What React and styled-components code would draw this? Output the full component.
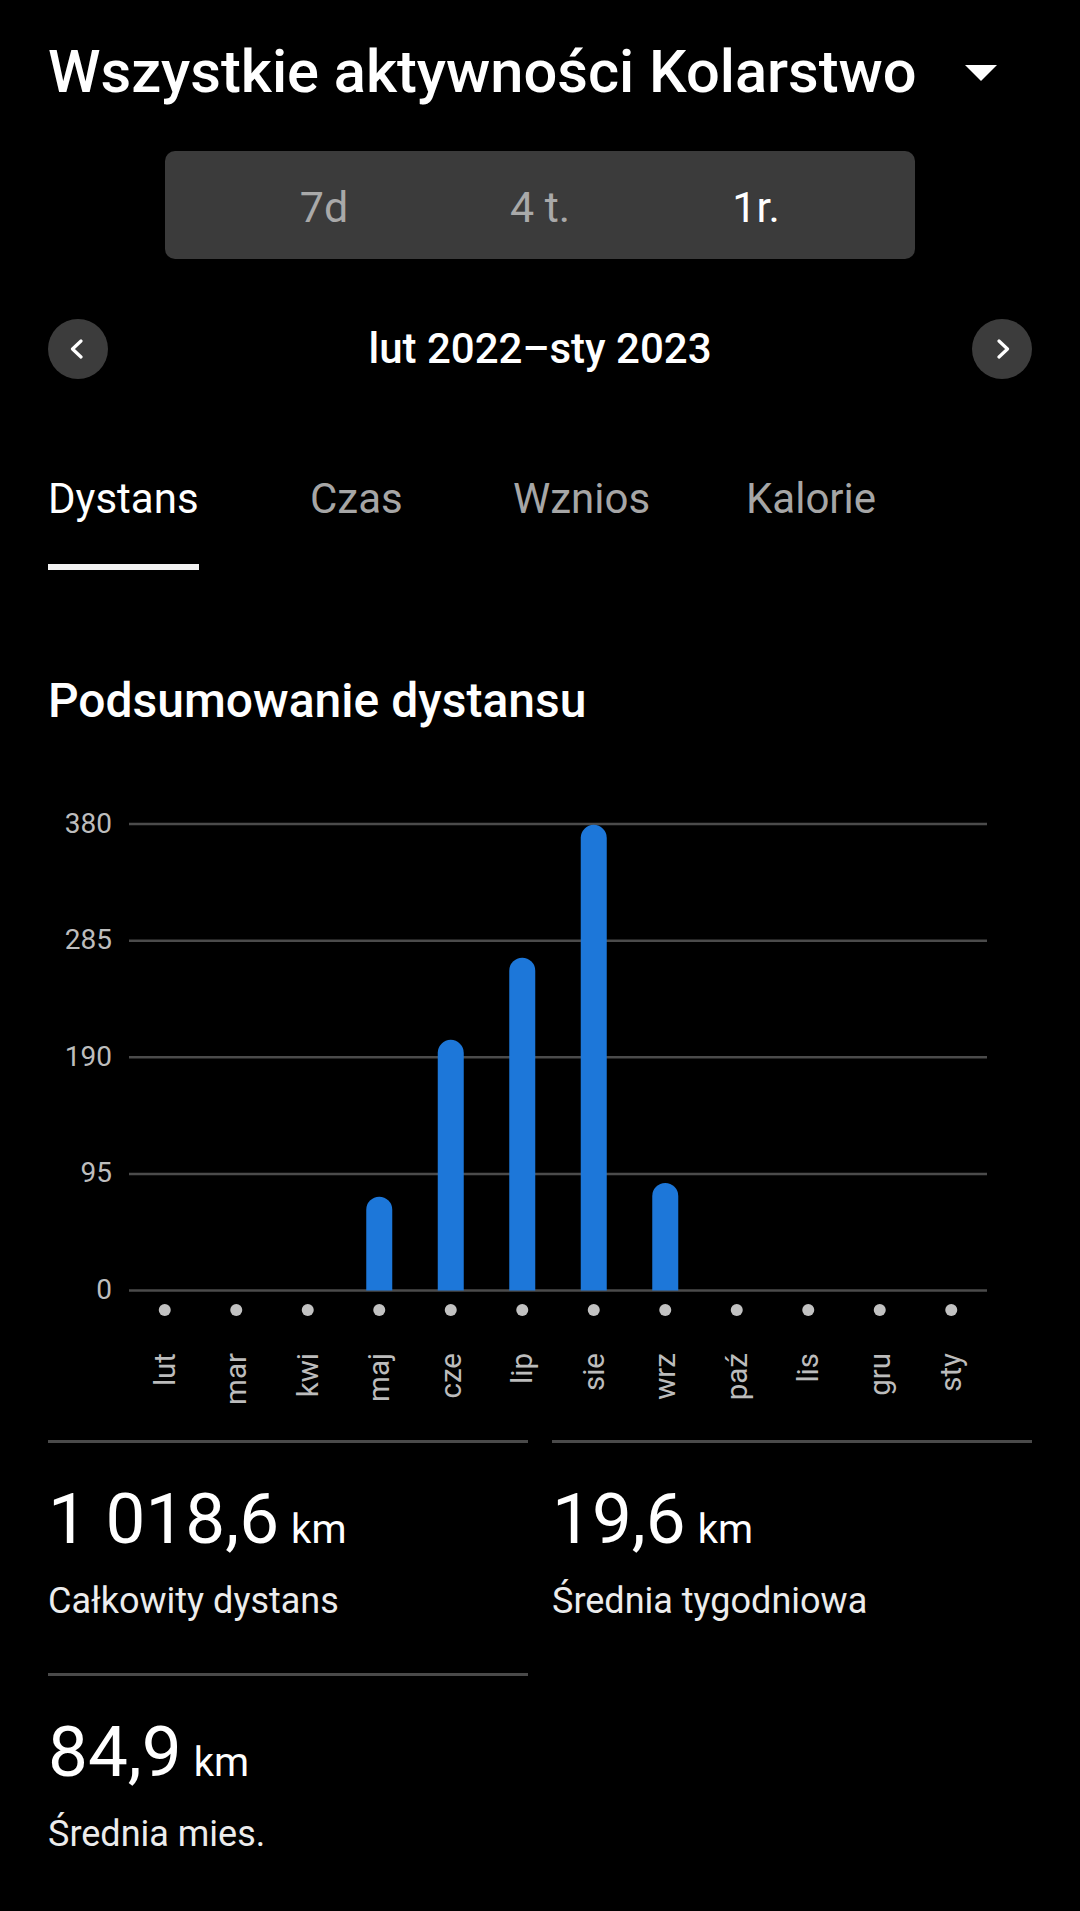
import React from "react";
import styled, { createGlobalStyle } from "styled-components";

const GlobalStyle = createGlobalStyle`
  html, body {
    margin: 0;
    padding: 0;
    background: #000;
  }
  body {
    font-family: Roboto, "Noto Sans", "Liberation Sans", sans-serif;
    color: #fff;
  }
`;

const Page = styled.div`
  width: 1080px;
  min-height: 1911px;
  box-sizing: border-box;
  padding: 43px 48px 0;
  background: #000;
`;

const HeaderRow = styled.div`
  display: flex;
  align-items: center;
  height: 59px;
`;

const Title = styled.h1`
  margin: 0;
  font-size: 59.6px;
  line-height: 59px;
  font-weight: 500;
  color: #fff;
  white-space: nowrap;
`;

const Caret = styled.svg`
  margin-left: 48px;
  flex: none;
`;

const Segmented = styled.div`
  margin: 49px auto 0;
  width: 750px;
  height: 108px;
  box-sizing: border-box;
  padding-top: 4px;
  border-radius: 10px;
  background: #3b3b3b;
  display: flex;
  align-items: center;
  justify-content: center;
`;

const Segment = styled.div`
  width: 216px;
  text-align: center;
  font-size: 43px;
  line-height: 43px;
  color: ${(p) => (p.$active ? "#ffffff" : "#a9a9a9")};
`;

const NavRow = styled.div`
  margin-top: 60px;
  height: 60px;
  display: flex;
  align-items: center;
  justify-content: space-between;
`;

const NavButton = styled.div`
  width: 60px;
  height: 60px;
  border-radius: 50%;
  background: #3c3c3c;
  display: flex;
  align-items: center;
  justify-content: center;
`;

const DateLabel = styled.div`
  font-size: 42px;
  line-height: 42px;
  font-weight: 500;
  color: #fff;
`;

const Tabs = styled.div`
  margin-top: 99px;
  display: grid;
  grid-template-columns: 262px 203px 233px auto;
  align-items: start;
`;

const Tab = styled.div`
  justify-self: start;
  font-size: 42px;
  line-height: 42px;
  padding-bottom: 44px;
  border-bottom: 6px solid ${(p) => (p.$active ? "#f2f2f2" : "transparent")};
  color: ${(p) => (p.$active ? "#ffffff" : "#a6a6a6")};
`;

const SectionTitle = styled.h2`
  margin: 107px 0 0;
  font-size: 48px;
  line-height: 48px;
  font-weight: 500;
  color: #fff;
`;

const ChartSvg = styled.svg`
  display: block;
  margin-top: 65px;
`;

const StatsGrid = styled.div`
  margin-top: 30px;
  display: grid;
  grid-template-columns: 480px 480px;
  column-gap: 24px;
`;

const StatCell = styled.div`
  border-top: 3px solid #4a4a4a;
  padding: 41px 0 54px;
`;

const StatValue = styled.div`
  display: flex;
  align-items: baseline;
  gap: 12px;
  height: 70px;
  font-size: 71px;
  line-height: 70px;
  color: #fff;
`;

const Unit = styled.span`
  font-size: 40px;
`;

const StatLabel = styled.div`
  margin-top: 30px;
  font-size: 36px;
  line-height: 35px;
  color: #ececec;
`;

const months = ["lut", "mar", "kwi", "maj", "cze", "lip", "sie", "wrz", "paź", "lis", "gru", "sty"];
const values = [0, 0, 0, 76.4, 204.2, 271.1, 379.3, 87.6, 0, 0, 0, 0];

const OFF = 790;
const PLOT_LEFT = 81;
const PLOT_RIGHT = 939;
const BASE = 1290.5 - OFF;
const PLOT_H = 466.5;
const MAX = 380;
const COL = (PLOT_RIGHT - PLOT_LEFT) / 12;
const BAR_W = 26;
const ticks = [0, 95, 190, 285, 380];

function barPath(cx, value) {
  const h = (value / MAX) * PLOT_H;
  const r = BAR_W / 2;
  const x0 = cx - r;
  const x1 = cx + r;
  const top = BASE - h;
  return `M${x0},${BASE} L${x0},${top + r} A${r},${r} 0 0 1 ${x1},${top + r} L${x1},${BASE} Z`;
}

function Chart() {
  return (
    <ChartSvg width="984" height="620" viewBox="0 0 984 620">
      {ticks.map((t) => {
        const y = BASE - (t / MAX) * PLOT_H;
        return (
          <g key={t}>
            <line x1={PLOT_LEFT} x2={PLOT_RIGHT} y1={y} y2={y} stroke="#4b4b4b" strokeWidth="2.5" />
            <text
              x="64"
              y={y - 1}
              textAnchor="end"
              dominantBaseline="central"
              fontFamily="Roboto, sans-serif"
              fontSize="28"
              fill="#bdbdbd"
            >
              {t}
            </text>
          </g>
        );
      })}
      {values.map((v, i) => {
        const cx = PLOT_LEFT + COL / 2 + COL * i;
        return v > 0 ? <path key={"b" + i} d={barPath(cx, v)} fill="#1d77d9" /> : null;
      })}
      {months.map((m, i) => {
        const cx = PLOT_LEFT + COL / 2 + COL * i;
        return (
          <g key={m}>
            <circle cx={cx} cy={1310 - OFF} r="6" fill="#c2c2c2" />
            <text
              transform={`translate(${cx} ${1353 - OFF}) rotate(-90)`}
              textAnchor="end"
              dominantBaseline="central"
              fontFamily="Roboto, sans-serif"
              fontSize="29.5"
              fill="#bcbcbc"
            >
              {m}
            </text>
          </g>
        );
      })}
    </ChartSvg>
  );
}

function Stat({ value, label }) {
  return (
    <StatCell>
      <StatValue>
        <span>{value}</span>
        <Unit>km</Unit>
      </StatValue>
      <StatLabel>{label}</StatLabel>
    </StatCell>
  );
}

export default function App() {
  return (
    <>
      <GlobalStyle />
      <Page>
        <HeaderRow>
          <Title>Wszystkie aktywności Kolarstwo</Title>
          <Caret width="32" height="16" viewBox="0 0 32 16">
            <polygon points="0,0 32,0 16,16" fill="#fff" />
          </Caret>
        </HeaderRow>

        <Segmented>
          <Segment>7d</Segment>
          <Segment>4 t.</Segment>
          <Segment $active>1r.</Segment>
        </Segmented>

        <NavRow>
          <NavButton>
            <svg width="20" height="20" viewBox="0 0 20 20">
              <polyline points="13,2 4.5,10 13,18" fill="none" stroke="#fff" strokeWidth="3.2" strokeLinecap="round" strokeLinejoin="round" />
            </svg>
          </NavButton>
          <DateLabel>lut 2022–sty 2023</DateLabel>
          <NavButton>
            <svg width="20" height="20" viewBox="0 0 20 20">
              <polyline points="7,2 15.5,10 7,18" fill="none" stroke="#fff" strokeWidth="3.2" strokeLinecap="round" strokeLinejoin="round" />
            </svg>
          </NavButton>
        </NavRow>

        <Tabs>
          <Tab $active>Dystans</Tab>
          <Tab>Czas</Tab>
          <Tab>Wznios</Tab>
          <Tab>Kalorie</Tab>
        </Tabs>

        <SectionTitle>Podsumowanie dystansu</SectionTitle>

        <Chart />

        <StatsGrid>
          <Stat value="1 018,6" label="Całkowity dystans" />
          <Stat value="19,6" label="Średnia tygodniowa" />
          <Stat value="84,9" label="Średnia mies." />
        </StatsGrid>
      </Page>
    </>
  );
}
